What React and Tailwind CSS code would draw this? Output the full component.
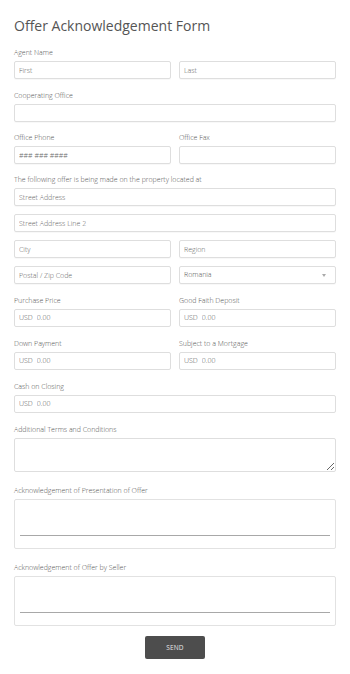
import { useState } from "react";

const inputCls =
  "block w-full h-[18px] border border-[#dedede] rounded-[2px] bg-white px-[4px] text-[7px] leading-[16px] font-light text-[#555] placeholder:text-[#666] outline-none shadow-[0_1px_1px_rgba(0,0,0,0.03)]";

const Label = ({ children }) => (
  <label className="block text-[7px] leading-[12px] font-light text-[#555] mb-[2px]">{children}</label>
);

const Money = () => (
  <div className="w-full h-[18px] border border-[#dedede] rounded-[2px] bg-white px-[4px] flex items-center gap-[4px] text-[7px] font-light text-[#555]">
    <span>USD</span>
    <input className="flex-1 min-w-0 bg-transparent outline-none font-light placeholder:text-[#555]" placeholder="0.00" />
  </div>
);

const Signature = () => (
  <div className="w-full h-[50px] border border-[#e2e2e2] rounded-[2px] bg-white flex flex-col justify-end px-[5px] pb-[12px]">
    <div className="h-px bg-[#a8a8a8]" />
  </div>
);

const App = () => {
  const [country, setCountry] = useState("Romania");

  return (
    <div className="w-[350px] min-h-[674px] bg-white" style={{ fontFamily: '"Open Sans", sans-serif' }}>
      <form className="px-[14px] pt-[16px] pb-[12px]" onSubmit={(e) => e.preventDefault()}>
        <h1 className="text-[14px] leading-[20px] text-[#555] font-normal">Offer Acknowledgement Form</h1>

        <div className="mt-[11px]">
          <Label>Agent Name</Label>
          <div className="grid grid-cols-2 gap-[8px]">
            <input className={inputCls} placeholder="First" />
            <input className={inputCls} placeholder="Last" />
          </div>
        </div>

        <div className="mt-[11px]">
          <Label>Cooperating Office</Label>
          <input className={inputCls} />
        </div>

        <div className="mt-[10px] grid grid-cols-2 gap-[8px]">
          <div>
            <Label>Office Phone</Label>
            <input className={inputCls} placeholder="### ### ####" />
          </div>
          <div>
            <Label>Office Fax</Label>
            <input className={inputCls} />
          </div>
        </div>

        <div className="mt-[10px]">
          <Label>The following offer is being made on the property located at</Label>
          <div className="flex flex-col gap-[8px]">
            <input className={inputCls} placeholder="Street Address" />
            <input className={inputCls} placeholder="Street Address Line 2" />
            <div className="grid grid-cols-2 gap-[8px]">
              <input className={inputCls} placeholder="City" />
              <input className={inputCls} placeholder="Region" />
            </div>
            <div className="grid grid-cols-2 gap-[8px]">
              <input className={inputCls} placeholder="Postal / Zip Code" />
              <div className="relative">
                <select
                  className={inputCls + " appearance-none py-0"}
                  value={country}
                  onChange={(e) => setCountry(e.target.value)}
                >
                  <option>Romania</option>
                  <option>Bulgaria</option>
                  <option>Moldova</option>
                </select>
                <span className="pointer-events-none absolute right-[10px] top-[8px] w-0 h-0 border-l-[2.5px] border-r-[2.5px] border-t-[3px] border-l-transparent border-r-transparent border-t-[#aaa]" />
              </div>
            </div>
          </div>
        </div>

        <div className="mt-[11px] grid grid-cols-2 gap-[8px]">
          <div>
            <Label>Purchase Price</Label>
            <Money />
          </div>
          <div>
            <Label>Good Faith Deposit</Label>
            <Money />
          </div>
        </div>

        <div className="mt-[11px] grid grid-cols-2 gap-[8px]">
          <div>
            <Label>Down Payment</Label>
            <Money />
          </div>
          <div>
            <Label>Subject to a Mortgage</Label>
            <Money />
          </div>
        </div>

        <div className="mt-[11px]">
          <Label>Cash on Closing</Label>
          <Money />
        </div>

        <div className="mt-[11px]">
          <Label>Additional Terms and Conditions</Label>
          <textarea className="block w-full h-[34px] border border-[#dedede] rounded-[2px] bg-white px-[4px] py-[2px] text-[7px] text-[#555] outline-none resize-y" />
        </div>

        <div className="mt-[13px]">
          <Label>Acknowledgement of Presentation of Offer</Label>
          <Signature />
        </div>

        <div className="mt-[13px]">
          <Label>Acknowledgement of Offer by Seller</Label>
          <Signature />
        </div>

        <div className="mt-[10px] flex justify-center">
          <button
            type="submit"
            className="w-[60px] h-[23px] bg-[#4d4d4d] rounded-[2px] text-[6.5px] text-[#e6e6e6] tracking-[0.2px]"
          >
            SEND
          </button>
        </div>
      </form>
    </div>
  );
};

export default App;
